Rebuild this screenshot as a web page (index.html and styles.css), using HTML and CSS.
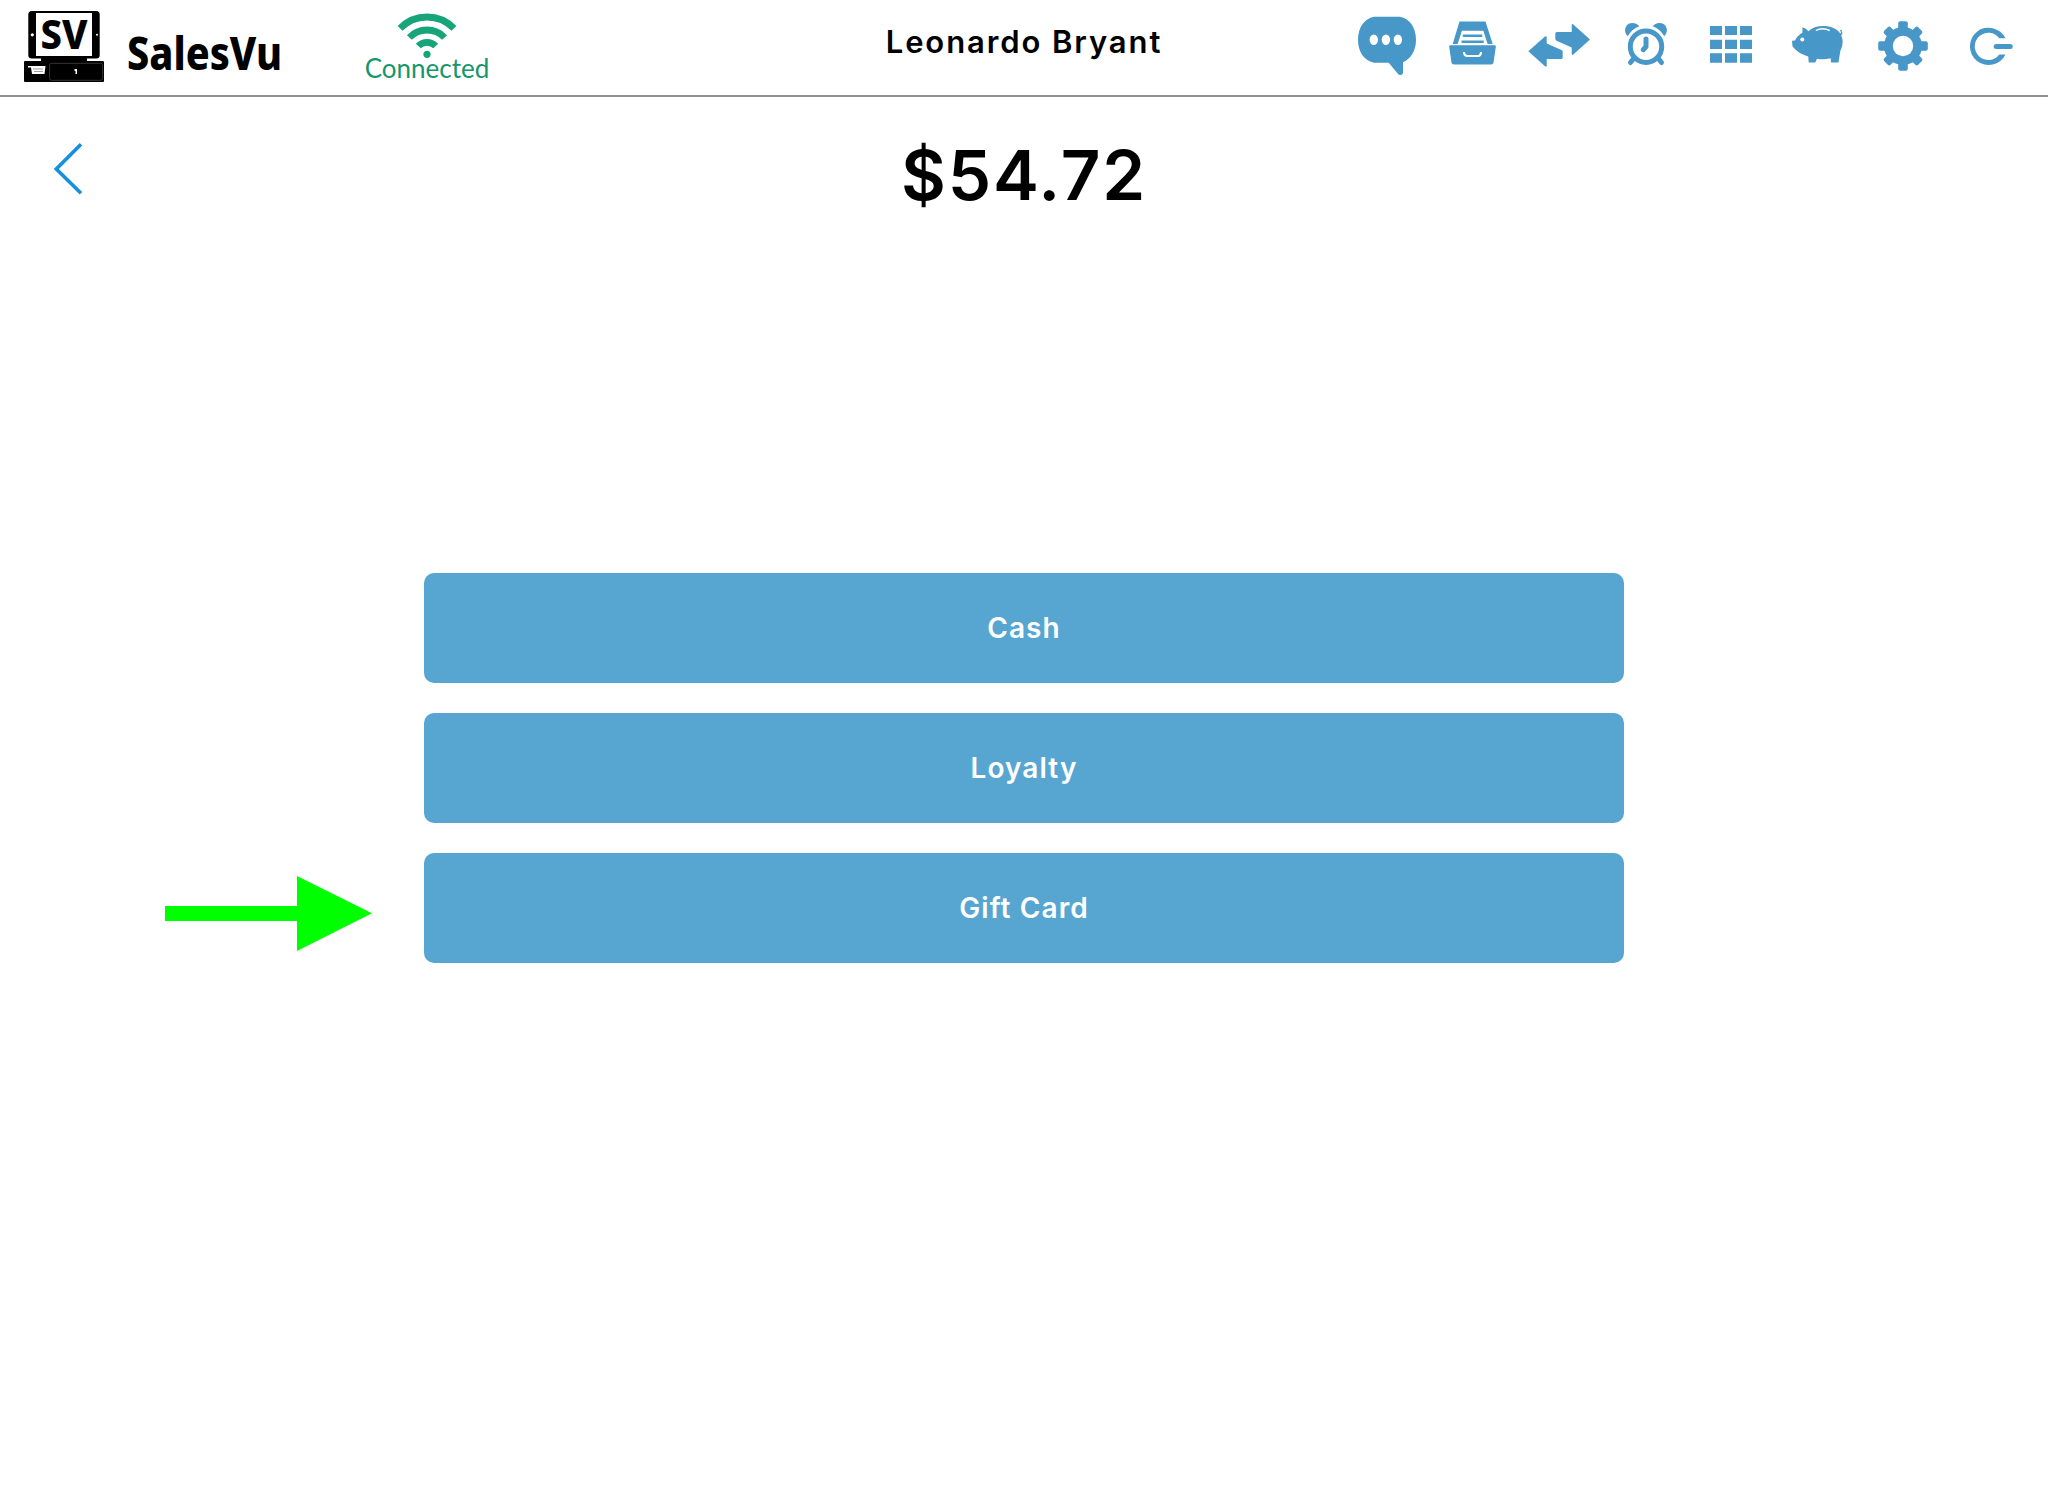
FILE: index.html
```html
<!DOCTYPE html>
<html lang="en">
<head>
    <meta charset="UTF-8">
    <meta name="viewport" content="width=device-width, initial-scale=1.0">
    <title>SalesVu - Payment</title>
    <link rel="stylesheet" href="styles.css">
</head>
<body>
    <header class="topbar">
        <div class="topbar-left">
            <svg class="logo" viewBox="0 0 300 95">
                <rect x="28.3" y="11" width="71.4" height="47.5" rx="3.5"/>
                <rect x="36" y="13" width="56" height="43" fill="#fff"/>
                <circle cx="32.3" cy="34.8" r="1.6" fill="#fff"/>
                <circle cx="97" cy="34.8" r="1" fill="#fff"/>
                <path d="M41 58H87V62H41Z"/>
                <rect x="24" y="61" width="80" height="21" rx="1"/>
                <rect x="49.6" y="63.3" width="53" height="17" rx="2" fill="none" stroke="#444" stroke-width="0.8"/>
                <path d="M74.5 69H77V74H75.5V71H74.5Z" fill="#fff"/>
                <path d="M28 66H45.500L44.500 74H32L31 67.500H28Z" fill="#fff"/>
                <path d="M33 69H43M34 71.500H43" stroke="#777" stroke-width="0.7"/>
                <text class="logo-mark" x="40.5" y="49.2" textLength="47" lengthAdjust="spacingAndGlyphs">SV</text>
                <text class="logo-name" x="127" y="70" textLength="155" lengthAdjust="spacingAndGlyphs">SalesVu</text>
            </svg>
            <div class="status">
                <svg class="wifi" viewBox="0 0 62 46">
                    <path d="M4.1 15.4A37.4 37.4 0 0 1 57.9 15.4M13.4 24.5A24.4 24.4 0 0 1 48.6 24.5M22.3 33A12.1 12.1 0 0 1 39.7 33" fill="none" stroke="#16a578" stroke-width="6.8"/>
                    <circle cx="31" cy="41.3" r="3.6" fill="#16a578"/>
                </svg>
                <span class="status-text">Connected</span>
            </div>
        </div>

        <div class="customer">Leonardo Bryant</div>

        <nav class="icons">
            <!-- messages -->
            <svg viewBox="0 0 86 95">
                <path d="M30 16.8H56C66 18.5 72 28 72 39.7C72 50.5 67 58.5 59 62.3V73Q58 76 54.5 74.5L44.7 62.7H30C19.5 60.5 14 51 14 39.7C14 28 20 18.5 30 16.8Z"/>
                <g fill="#fff">
                    <ellipse cx="29.8" cy="39.7" rx="4.2" ry="5.2"/>
                    <ellipse cx="41.9" cy="39.7" rx="4.2" ry="5.2"/>
                    <ellipse cx="53.9" cy="39.7" rx="4.2" ry="5.2"/>
                </g>
            </svg>
            <!-- cash drawer -->
            <svg viewBox="0 0 86 95">
                <path fill-rule="evenodd" d="M29.5 21.5H55.5L62.7 44H22.7ZM31.9 30.7L27.7 44H57.6L53.3 30.7Z"/>
                <path d="M32.8 35.8H52.3M31.5 41.8H53.7" fill="none" stroke="#4797c9" stroke-width="2.6"/>
                <path d="M20 45.3H65Q66 45.3 65.8 47L63.5 62.5Q63.2 64.5 61 64.5H24Q21.8 64.5 21.5 62.5L19.2 47Q19 45.3 20 45.3Z"/>
                <path d="M34 52Q34 56 37.5 56H48Q51 56 51 52" fill="none" stroke="#fff" stroke-width="2.2"/>
            </svg>
            <!-- transfer -->
            <svg viewBox="0 0 86 95">
                <path d="M12.3 51.3L29 36.5Q30.7 35.5 30.7 37.5V43.5L45.5 50Q46.7 50.7 46.7 52V57.5Q46.7 59 45 59H30.7V65.5Q30.7 67.5 29 66.3Z"/>
                <path d="M74 39.5L57.3 24.6Q55.7 23.3 55.7 25.5V32H41Q39.3 32 39.3 33.5V38.5Q39.3 40 40.5 40.7L55.7 47.5V53.5Q55.7 55.7 57.3 54.5Z"/>
            </svg>
            <!-- time clock -->
            <svg viewBox="0 0 86 95">
                <path d="M25.8 36.3C20.5 31 23.5 23 30.5 23C33.5 23 35.8 24.5 37.3 26.3C32 28.3 28.3 31.5 25.8 36.3Z"/>
                <path d="M62.2 36.3C67.5 31 64.5 23 57.5 23C54.5 23 52.2 24.5 50.7 26.3C56 28.3 59.7 31.5 62.2 36.3Z"/>
                <g fill="none" stroke="#4797c9" stroke-width="5" stroke-linecap="round" stroke-linejoin="round">
                    <circle cx="44" cy="46.7" r="15.7"/>
                    <path d="M32.5 57.5L28.5 62.5M55.5 57.5L59.5 62.5M44 39V46.7L41.2 49.7"/>
                </g>
            </svg>
            <!-- register grid -->
            <svg viewBox="0 0 86 95">
                <path d="M22 26H34V35H22ZM37 26H49V35H37ZM52 26H64V35H52ZM22 39.7H34V49H22ZM37 39.7H49V49H37ZM52 39.7H64V49H52ZM22 53.2H34V62.7H22ZM37 53.2H49V62.7H37ZM52 53.2H64V62.7H52Z"/>
            </svg>
            <!-- piggy bank -->
            <svg viewBox="0 0 86 95">
                <path d="M18 40.8L21 40.5C22 38 24.5 35 28.5 32.5L28.3 27.6C31 28 33 29.5 34.3 31.2C38 27.5 43 25.9 49 25.9C57 25.9 63 28.5 66.3 33.5C67.5 32.8 67.3 31.8 66.8 31.2C65.3 32.5 65.3 29.5 68 29.7L67.5 31C69 32.5 68.5 34.5 67.2 35.5C69.5 40 69 46 66.3 51L64.5 62.6H57L56.7 58.3C52 59.5 46.5 59.5 43 58.7L41.3 62.6H34.7L34.3 56.5C27 54.2 21.5 50.5 18.5 46.2Z"/>
                <circle cx="28.3" cy="39.4" r="2" fill="#fff"/>
                <path d="M41.8 30.5Q48.7 27 55.7 30.5" fill="none" stroke="#fff" stroke-width="1.4"/>
            </svg>
            <!-- settings -->
            <svg viewBox="0 0 86 95">
                <circle cx="43" cy="46" r="19"/>
                <rect x="38.2" y="21.2" width="9.6" height="49.6" rx="2"/>
                <rect x="38.2" y="21.2" width="9.6" height="49.6" rx="2" transform="rotate(90 43 46)"/>
                <rect x="38.5" y="22" width="9" height="48" rx="2" transform="rotate(45 43 46)"/>
                <rect x="38.5" y="22" width="9" height="48" rx="2" transform="rotate(-45 43 46)"/>
                <circle cx="43" cy="46" r="10.2" fill="#fff"/>
            </svg>
            <!-- log out -->
            <svg viewBox="0 0 86 95">
                <path d="M59.5 38.3A18.7 18.7 0 1 0 59.5 54.4H53.3A13.6 13.6 0 1 1 53.3 38.3Z"/>
                <rect x="47.7" y="43.9" width="19" height="5" rx="2.5"/>
            </svg>
        </nav>
    </header>

    <main class="payment">
        <div class="total-row">
            <a class="back" href="#" aria-label="Back">
                <svg viewBox="0 0 30 54">
                    <path d="M28 2.300L3.300 27L28 51.300" fill="none" stroke="#158fe0" stroke-width="3.600"/>
                </svg>
            </a>
            <h1 class="total">$54.72</h1>
        </div>

        <div class="options">
            <button class="option" type="button">Cash</button>
            <button class="option" type="button">Loyalty</button>
            <div class="option-wrap">
                <svg class="pointer" viewBox="0 0 207 75">
                    <path d="M0 30H132V0L207 37.3L132 75V45H0Z" fill="#00ff00"/>
                </svg>
                <button class="option" type="button">Gift Card</button>
            </div>
        </div>
    </main>
</body>
</html>
```

FILE: styles.css
```css
* {
    box-sizing: border-box;
}

body {
    margin: 0;
    background-color: #fff;
    color: #000;
    font-family: Inter, "Liberation Sans", sans-serif;
}

svg {
    display: block;
}

.topbar {
    display: grid;
    grid-template-columns: 1fr auto 1fr;
    height: 97px;
    border-bottom: 2px solid #8e9095;
}

.topbar-left {
    display: flex;
}

.logo {
    width: 300px;
    height: 95px;
    overflow: visible;
}

.logo-mark,
.logo-name {
    font-family: "Noto Sans", "Open Sans", sans-serif;
    font-weight: 800;
}

.logo-mark {
    font-size: 41px;
}

.logo-name {
    font-size: 46px;
}

.status {
    display: flex;
    flex-direction: column;
    align-items: center;
    width: 122px;
    margin-left: 66px;
    padding-top: 13px;
}

.wifi {
    width: 62px;
    height: 46px;
}

.status-text {
    margin-top: -8px;
    font-family: Lato, sans-serif;
    font-size: 26px;
    line-height: 34px;
    color: #16966c;
}

.customer {
    padding-top: 21px;
    font-size: 31px;
    font-weight: 600;
    line-height: 42px;
    letter-spacing: 1.9px;
}

.icons {
    display: flex;
    justify-content: flex-end;
    padding-right: 16px;
}

.icons svg {
    width: 86px;
    height: 95px;
    fill: #4797c9;
}

.total-row {
    display: grid;
    grid-template-columns: 1fr auto 1fr;
    height: 476px;
    align-items: start;
}

.back {
    width: 30px;
    margin: 45px 0 0 53px;
}

.total {
    margin: 36px 0 0;
    font-size: 69px;
    font-weight: 600;
    line-height: 84px;
    letter-spacing: 1.8px;
}

.options {
    display: flex;
    flex-direction: column;
    gap: 30px;
    width: 1200px;
    margin: 0 auto;
}

.option {
    display: block;
    width: 100%;
    height: 110px;
    padding: 0;
    border: none;
    border-radius: 10px;
    background-color: #57a6d2;
    color: #fff;
    font-family: inherit;
    font-size: 28px;
    font-weight: 600;
    letter-spacing: 1.1px;
    cursor: pointer;
}

.option-wrap {
    position: relative;
}

/* arrow sits outside the button, left of it */
.pointer {
    position: absolute;
    top: 23px;
    left: -259px;
    width: 207px;
    height: 75px;
}
```
